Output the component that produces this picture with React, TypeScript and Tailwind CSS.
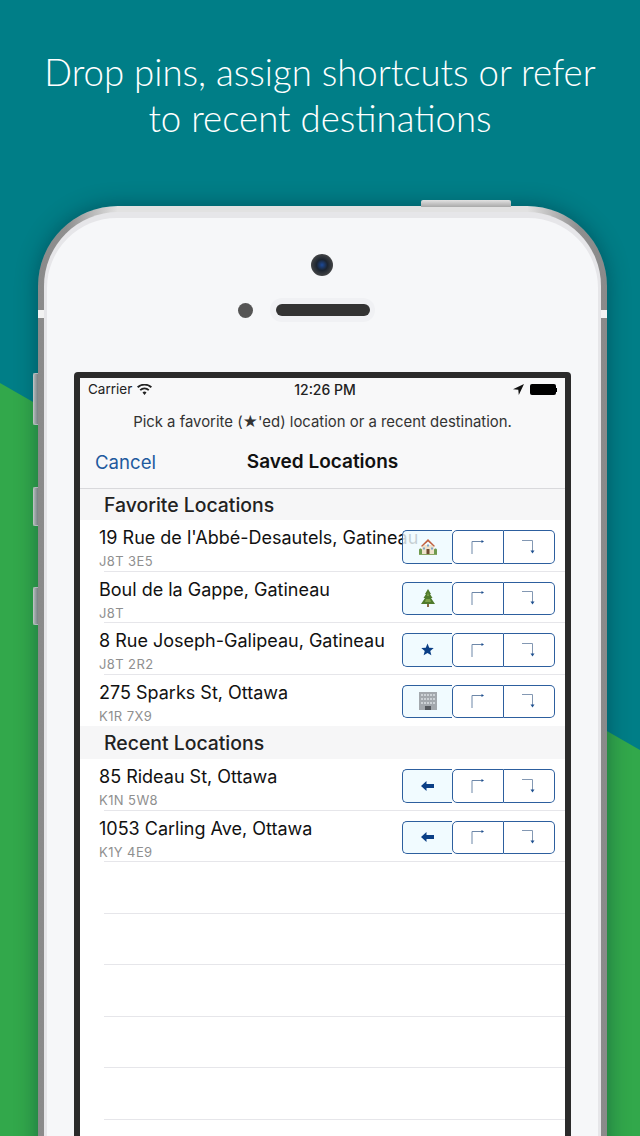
import React from "react";

const uiFont = "font-['Inter','Liberation_Sans',sans-serif]";

type Marker = "house" | "tree" | "star" | "office" | "back";

type Place = { title: string; sub: string; marker: Marker; noLine?: boolean };

const favorites: Place[] = [
  { title: "19 Rue de l'Abbé-Desautels, Gatineau", sub: "J8T 3E5", marker: "house" },
  { title: "Boul de la Gappe, Gatineau", sub: "J8T", marker: "tree" },
  { title: "8 Rue Joseph-Galipeau, Gatineau", sub: "J8T 2R2", marker: "star" },
  { title: "275 Sparks St, Ottawa", sub: "K1R 7X9", marker: "office", noLine: true },
];

const recents: Place[] = [
  { title: "85 Rideau St, Ottawa", sub: "K1N 5W8", marker: "back" },
  { title: "1053 Carling Ave, Ottawa", sub: "K1Y 4E9", marker: "back" },
];

const MarkerIcon: React.FC<{ marker: Marker }> = ({ marker }) => {
  if (marker === "house") {
    return (
      <svg width="18" height="17" viewBox="0 0 18 17">
        <path d="M0 12c0-2 3-2 3 0v4H0zM15 12c0-2 3-2 3 0v4h-3z" fill="#6f9a4e" />
        <path d="M3 7h12v9H3z" fill="#efe2cc" />
        <path d="M9 1 2 8l1 .8L9 3.500l6 5.300 1-.8z" fill="#c0603f" />
        <path d="M7.500 11h3v5h-3z" fill="#6f4a32" />
        <path d="M4 9.500h2v2H4zM12 9.500h2v2h-2zM8 6.500h2v2H8z" fill="#7fa9c9" />
        <path d="M0 16h18v1H0z" fill="#8aa765" />
      </svg>
    );
  }
  if (marker === "tree") {
    return (
      <svg width="16" height="18" viewBox="0 0 16 18">
        <path d="M7 14h2v4H7z" fill="#8a6a45" />
        <path d="M8 0 5 5H6L3.500 9H5L1 15h14l-4-6h1.500L10 5h1z" fill="#4f7a2c" />
        <path d="M8 3 7 7h2zM6 10l-1 3h6l-1-3z" fill="#7ea24a" />
      </svg>
    );
  }
  if (marker === "star") {
    return (
      <svg width="13" height="13" viewBox="0 0 24 24">
        <path d="M12 1l3.200 7.700 8.300.6-6.400 5.300 2 8.100L12 18.300 4.900 22.700l2-8.100L.5 9.300l8.300-.6z" fill="#0b3f86" />
      </svg>
    );
  }
  if (marker === "office") {
    return (
      <svg width="18" height="18" viewBox="0 0 18 18">
        <path d="M0 0h18v18H0z" fill="#a3a8ad" />
        <path
          d="M2 2h2v2H2zM5 2h2v2H5zM8 2h2v2H8zM11 2h2v2h-2zM14 2h2v2h-2zM2 6h2v2H2zM5 6h2v2H5zM8 6h2v2H8zM11 6h2v2h-2zM14 6h2v2h-2zM2 10h2v2H2zM5 10h2v2H5zM8 10h2v2H8zM11 10h2v2h-2zM14 10h2v2h-2z"
          fill="#cdd2d6"
        />
        <path d="M6 14h6v4H6z" fill="#55595e" />
      </svg>
    );
  }
  return (
    <svg width="13" height="10" viewBox="0 0 13 10">
      <path d="M0 5l5.500-5v3H13v4H5.500v3z" fill="#0b3f86" />
    </svg>
  );
};

const TurnRight = () => (
  <svg width="13" height="14" viewBox="0 0 13 14">
    <path d="M1 14V1.500h10" fill="none" stroke="#6d87a8" strokeWidth="1" />
    <path d="M10.500 0 13 1.500 10.500 3z" fill="#1d4f8f" />
  </svg>
);

const TurnDown = () => (
  <svg width="13" height="14" viewBox="0 0 13 14">
    <path d="M0 .5h10.500V11" fill="none" stroke="#8398b3" strokeWidth="1" />
    <path d="M8.500 10.500h4L10.500 13.500z" fill="#1d4f8f" />
  </svg>
);

const Row: React.FC<Place> = ({ title, sub, marker, noLine }) => (
  <div className="relative h-[51.5px] bg-white pl-[19px]">
    <div className="whitespace-nowrap pt-[7px] text-[18px] leading-[22px] text-[#111]">{title}</div>
    <div className="pt-[4px] text-[13px] leading-[16px] tracking-[0.4px] text-[#8f8f8f]">{sub}</div>
    {!noLine && <div className="absolute bottom-0 left-[24px] right-0 border-b border-[#e6e6ea]" />}
    <div className="absolute left-[322px] top-[10px] flex h-[33.500px] w-[153px]">
      <div className="flex w-[50px] items-center justify-center rounded-l-[5px] border-[1.500px] border-r-0 border-[#2d5f9e] bg-[#eefaffd0]">
        <MarkerIcon marker={marker} />
      </div>
      <div className="flex w-[51.500px] items-center justify-center rounded-l-[5px] border-[1.500px] border-[#2d5f9e] bg-white">
        <TurnRight />
      </div>
      <div className="flex w-[51.500px] items-center justify-center rounded-r-[5px] border-[1.500px] border-l-0 border-[#2d5f9e] bg-white">
        <TurnDown />
      </div>
    </div>
  </div>
);

const SectionHeader: React.FC<{ label: string; h: string; pt: string }> = ({ label, h, pt }) => (
  <div className={`${h} ${pt} flex items-center bg-[#f6f6f7] pl-[24px] text-[19.400px] font-[550] text-[#222]`}>{label}</div>
);

const SideKey: React.FC<{ h: string; mt: string }> = ({ h, mt }) => (
  <div className={`${h} ${mt} w-[5px] rounded-l-[2px] border border-r-0 border-[#dcdcdc] bg-gradient-to-r from-[#cfcfcf] to-[#9c9c9c]`} />
);

export default function App() {
  return (
    <div className="relative h-[1136px] w-[640px] overflow-hidden bg-[#007e87]">
      {/* green slope behind the phone */}
      <svg className="absolute inset-0" width="640" height="1136" viewBox="0 0 640 1136">
        <path d="M0 383 640 750V1136H0z" fill="#32a84b" />
      </svg>

      <div className="relative pt-[49px] text-center font-['Lato',sans-serif] text-[36.600px] font-light leading-[46px] text-white">
        <div>Drop pins, assign shortcuts or refer</div>
        <div>to recent destinations</div>
      </div>

      <div className="relative ml-[33px] mt-[59px] flex">
        {/* left keys */}
        <div className="flex flex-col pt-[173px]">
          <SideKey h="h-[52px]" mt="mt-0" />
          <SideKey h="h-[39px]" mt="mt-[62px]" />
          <SideKey h="h-[38px]" mt="mt-[61px]" />
        </div>

        <div className="relative w-[569px]">
          {/* top key */}
          <div className="absolute left-[383px] top-0 h-[7px] w-[90px] rounded-t-[2px] bg-gradient-to-b from-[#e2e2e2] to-[#a9a9a9]" />

          <div className="mt-[6px] h-[1000px] rounded-t-[80px] bg-[linear-gradient(to_right,#8a8a8a_0%,#8f8f8f_5%,#e2e2e2_14%,#e2e2e2_86%,#8f8f8f_95%,#8a8a8a_100%)] px-[6px] pt-[6px] shadow-[0_0_22px_rgba(0,40,50,0.45)]">
            <div className="h-full rounded-t-[74px] bg-[#e6e6e9] px-[3px] pt-[6px]">
              <div className="h-full rounded-t-[70px] bg-[#f6f7f9] px-[27px] pt-[154px]">
                <div className={`h-[800px] rounded-t-[4px] bg-[#2b2b2b] px-[6px] pt-[6px] ${uiFont}`}>
                  <div className="h-full bg-white">
                    <div className="h-[111px] border-b border-[#d9d9dc] bg-[#f8f8f9]">
                      <div className="relative flex h-[23px] items-center pl-[8px] pr-[8px] text-[13.500px] text-[#222]">
                        <span>Carrier</span>
                        <svg className="ml-[5px]" width="15" height="11" viewBox="0 0 15 11">
                          <path d="M7.500 11 5.500 8.500a3 3 0 0 1 4 0zM3.800 6.800l-1.200-1.400a7.500 7.500 0 0 1 9.800 0l-1.200 1.400a5.700 5.700 0 0 0-7.400 0zM1.300 3.900 0 2.500a11.500 11.500 0 0 1 15 0l-1.300 1.400a9.500 9.500 0 0 0-12.400 0z" fill="#222" />
                        </svg>
                        <span className="absolute left-0 right-0 pl-[5px] text-center text-[14px] font-medium">12:26 PM</span>
                        <svg className="ml-auto" width="11" height="11" viewBox="0 0 11 11">
                          <path d="M11 0 0 5.200l5.300.6L5.800 11z" fill="#111" />
                        </svg>
                        <div className="ml-[6px] h-[11px] w-[26px] rounded-[2px] bg-black" />
                        <div className="h-[4px] w-[1.500px] bg-black" />
                      </div>
                      <div className="pt-[12px] text-center text-[14.900px] leading-[19px] text-[#333]">
                        Pick a favorite (★'ed) location or a recent destination.
                      </div>
                      <div className="relative mt-[18px] flex items-center pl-[15px] text-[18.600px] leading-[24px]">
                        <span className="text-[#1f5a9e]">Cancel</span>
                        <span className="absolute left-0 right-0 text-center text-[19px] font-semibold text-[#111]">Saved Locations</span>
                      </div>
                    </div>
                    <SectionHeader label="Favorite Locations" h="h-[31px]" pt="pt-[2px]" />
                    {favorites.map(item => (
                      <Row key={item.title} {...item} />
                    ))}
                    <SectionHeader label="Recent Locations" h="h-[33px]" pt="pt-[3px]" />
                    {recents.map(item => (
                      <Row key={item.title} {...item} />
                    ))}
                    {[0, 1, 2, 3, 4].map(i => (
                      <div key={i} className="ml-[24px] h-[51.5px] border-b border-[#e6e6ea]" />
                    ))}
                  </div>
                </div>
              </div>
            </div>
          </div>
          {/* antenna bands */}
          <div className="absolute left-0 top-[110px] h-[8px] w-[6px] bg-[#f2f2f2]" />
          <div className="absolute right-0 top-[110px] h-[8px] w-[6px] bg-[#f2f2f2]" />

          {/* camera, sensor, speaker */}
          <div className="absolute left-[273px] top-[54px] h-[22px] w-[22px] rounded-full bg-[radial-gradient(circle,#1c4a9a_0%,#1c2430_35%,#3d3f42_65%,#66696d_100%)]" />
          <div className="absolute left-[199.500px] top-[102.500px] h-[15px] w-[15px] rounded-full bg-[#555]" />
          <div className="absolute left-[232px] top-[98px] flex h-[24px] w-[105px] items-center justify-center rounded-full bg-[#f0f1f4]">
            <div className="h-[12px] w-[94px] rounded-full bg-[radial-gradient(#666_30%,#333_31%)] bg-[length:2px_2px]" />
          </div>
        </div>
      </div>
    </div>
  );
}
